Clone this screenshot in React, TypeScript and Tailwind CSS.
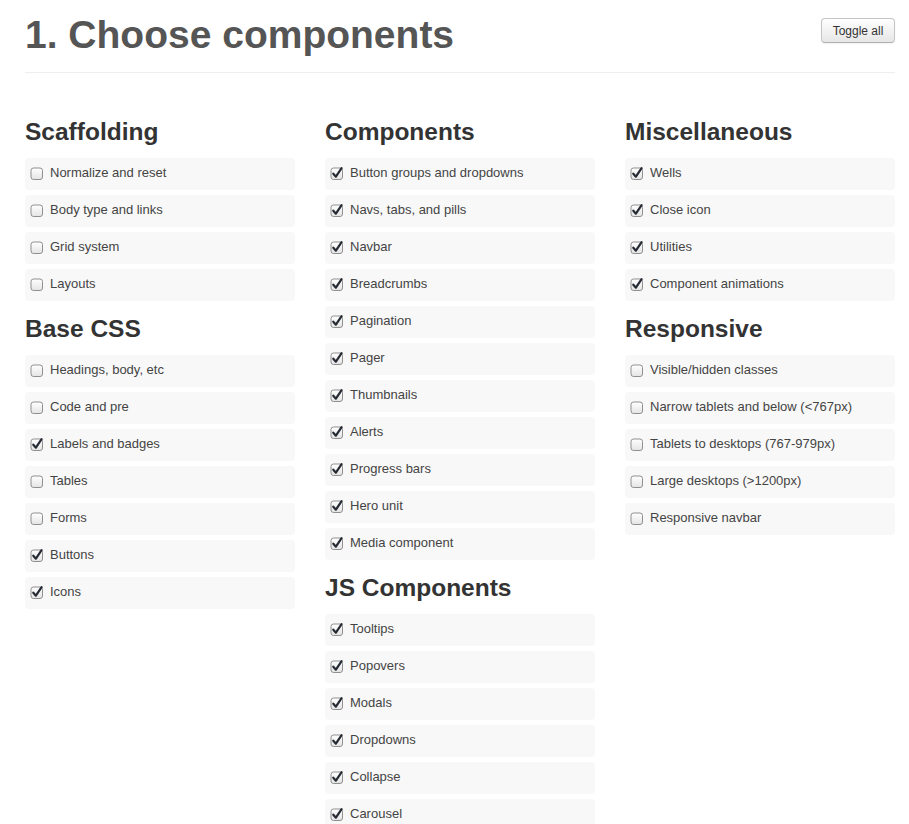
import React from "react";

type Item = [string, boolean];
type Section = { title: string; items: Item[] };

const col1: Section[] = [
  {
    title: "Scaffolding",
    items: [
      ["Normalize and reset", false],
      ["Body type and links", false],
      ["Grid system", false],
      ["Layouts", false],
    ],
  },
  {
    title: "Base CSS",
    items: [
      ["Headings, body, etc", false],
      ["Code and pre", false],
      ["Labels and badges", true],
      ["Tables", false],
      ["Forms", false],
      ["Buttons", true],
      ["Icons", true],
    ],
  },
];

const col2: Section[] = [
  {
    title: "Components",
    items: [
      ["Button groups and dropdowns", true],
      ["Navs, tabs, and pills", true],
      ["Navbar", true],
      ["Breadcrumbs", true],
      ["Pagination", true],
      ["Pager", true],
      ["Thumbnails", true],
      ["Alerts", true],
      ["Progress bars", true],
      ["Hero unit", true],
      ["Media component", true],
    ],
  },
  {
    title: "JS Components",
    items: [
      ["Tooltips", true],
      ["Popovers", true],
      ["Modals", true],
      ["Dropdowns", true],
      ["Collapse", true],
      ["Carousel", true],
    ],
  },
];

const col3: Section[] = [
  {
    title: "Miscellaneous",
    items: [
      ["Wells", true],
      ["Close icon", true],
      ["Utilities", true],
      ["Component animations", true],
    ],
  },
  {
    title: "Responsive",
    items: [
      ["Visible/hidden classes", false],
      ["Narrow tablets and below (<767px)", false],
      ["Tablets to desktops (767-979px)", false],
      ["Large desktops (>1200px)", false],
      ["Responsive navbar", false],
    ],
  },
];

function Box({ checked }: { checked: boolean }) {
  return (
    <svg width="14" height="14" viewBox="0 0 14 14" className="shrink-0 overflow-visible">
      <defs>
        <linearGradient id="cbg" x1="0" y1="0" x2="0" y2="1">
          <stop offset="0" stopColor="#ffffff" />
          <stop offset="1" stopColor="#e4e4e4" />
        </linearGradient>
      </defs>
      <rect x="1" y="1" width="11.5" height="11.5" rx="2.5" fill="url(#cbg)" stroke="#8f8f8f" strokeWidth="1" />
      {checked && (
        <path
          d="M3.3 6.7 L5.9 9.7 L11.6 1.1"
          fill="none"
          stroke="#262a33"
          strokeWidth="2.2"
          strokeLinecap="round"
          strokeLinejoin="round"
        />
      )}
    </svg>
  );
}

function Column({ sections }: { sections: Section[] }) {
  return (
    <div className="flex flex-col">
      {sections.map((s) => (
        <div key={s.title} className="flex flex-col">
          <div className="h-[54px] flex items-end pb-[12px]">
            <h3 className="text-[24.5px] leading-[28px] font-bold text-[#333]">{s.title}</h3>
          </div>
          <div className="flex flex-col gap-[5px]">
            {s.items.map(([label, checked]) => (
              <div
                key={label}
                className="h-[32px] rounded-[4px] bg-[#f8f8f8] flex items-center pl-[5px] gap-[6px]"
              >
                <Box checked={checked} />
                <span className="text-[13px] text-[#444] leading-[18px] -mt-[2px]">{label}</span>
              </div>
            ))}
          </div>
        </div>
      ))}
    </div>
  );
}

export default function App() {
  return (
    <div
      className="w-[909px] h-[824px] overflow-hidden bg-white"
      style={{ fontFamily: '"Liberation Sans", Arial, Helvetica, sans-serif' }}
    >
      <div className="ml-[25px] w-[870px]">
        <div className="h-[73px] flex justify-between items-start border-b border-[#eeeeee]">
          <h1 className="pt-[12px] text-[39px] leading-[45px] font-bold text-[#555]">1. Choose components</h1>
          <button className="mt-[18px] h-[25px] w-[74px] rounded-[4px] border border-[#c5c5c5] border-b-[#b0b0b0] bg-gradient-to-b from-white to-[#e6e6e6] text-[12px] text-[#333] shadow-[inset_0_1px_0_rgba(255,255,255,0.2),0_1px_2px_rgba(0,0,0,0.05)]">
            Toggle all
          </button>
        </div>
        <div className="pt-[31px] grid grid-cols-3 gap-x-[30px]">
          <Column sections={col1} />
          <Column sections={col2} />
          <Column sections={col3} />
        </div>
      </div>
    </div>
  );
}
